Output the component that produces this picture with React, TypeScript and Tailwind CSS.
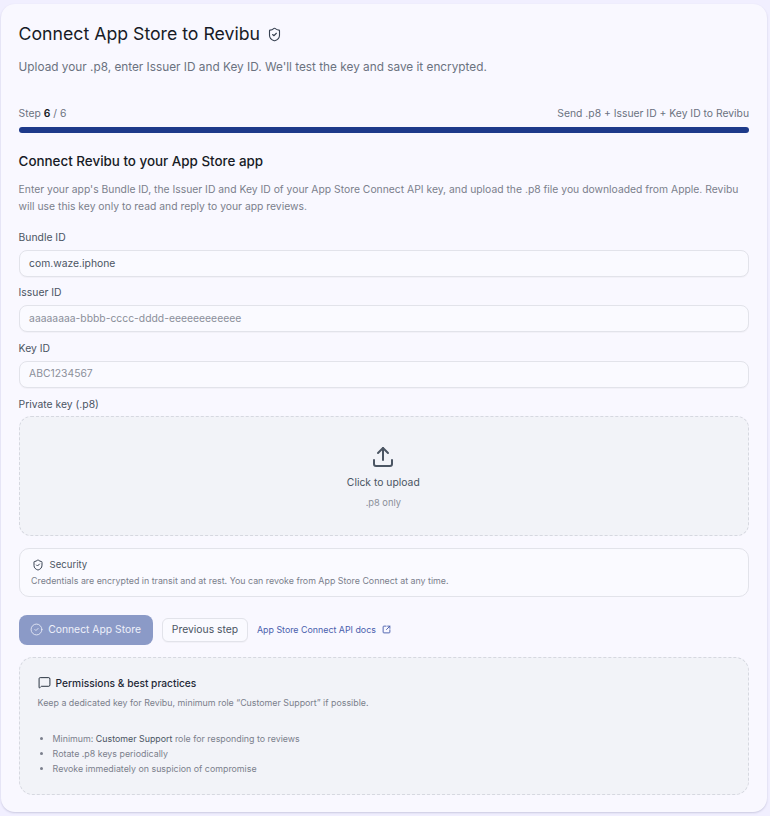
import { ShieldCheck, Upload, CircleCheck, SquareArrowOutUpRight, MessageSquare } from "lucide-react";

function Field({ label, value, placeholder }: { label: string; value?: string; placeholder?: boolean }) {
  return (
    <div className="flex flex-col">
      <label className="text-[10.35px] leading-[14px] text-[#4b5563] mb-[6px]">{label}</label>
      <div className={`h-[27px] rounded-[8px] border border-[#e2e3ea] bg-[#fafaff] shadow-[0_1px_1px_rgba(0,0,0,0.03)] flex items-center px-[9.5px] text-[10.35px] ${placeholder ? "text-[#8b8f9a]" : "text-[#4b5563]"}`}>
        {value}
      </div>
    </div>
  );
}

export default function App() {
  return (
    <div className="w-[770px] h-[816px] bg-[#f1efff] overflow-hidden font-['Inter',sans-serif] pt-[4px] pl-[1px]">
      <div className="w-[766px] h-[808px] bg-[#f9f8ff] rounded-[14px] shadow-[0_1px_2px_rgba(90,90,130,0.25)] pt-[19px] pl-[17.6px] pr-[18px]">
        <div className="flex items-center gap-[7px] h-[22px]">
          <h1 className="text-[17.7px] leading-[22px] font-normal text-[#171b26]">Connect App Store to Revibu</h1>
          <ShieldCheck size={15} strokeWidth={1.75} className="text-[#374151]" />
        </div>
        <p className="mt-[13px] text-[11.8px] leading-[18px] text-[#6b7280]">Upload your .p8, enter Issuer ID and Key ID. We'll test the key and save it encrypted.</p>
        <div className="mt-[30px] flex justify-between text-[10.35px] leading-[14px] text-[#6b7280]">
          <span>Step <b className="font-semibold text-[#171b26]">6</b> / 6</span>
          <span>Send .p8 + Issuer ID + Key ID to Revibu</span>
        </div>
        <div className="mt-[7px] h-[6px] rounded-full bg-[#1e3a8a]" />
        <h2 className="mt-[18px] text-[13.4px] leading-[20px] font-medium text-[#171b26]">Connect Revibu to your App Store app</h2>
        <p className="mt-[10px] text-[10.35px] leading-[17px] text-[#7b7f8c]">Enter your app's Bundle ID, the Issuer ID and Key ID of your App Store Connect API key, and upload the .p8 file you downloaded from Apple. Revibu will use this key only to read and reply to your app reviews.</p>
        <div className="mt-[15px] flex flex-col gap-[8.3px]">
          <Field label="Bundle ID" value="com.waze.iphone" />
          <Field label="Issuer ID" value="aaaaaaaa-bbbb-cccc-dddd-eeeeeeeeeeee" placeholder />
          <Field label="Key ID" value="ABC1234567" placeholder />
        </div>
        <label className="block mt-[9.4px] text-[10.35px] leading-[14px] text-[#4b5563]">Private key (.p8)</label>
        <div className="mt-[5px] h-[120px] rounded-[12px] border border-dashed border-[#d6d8e0] bg-[#f2f3f8] flex flex-col items-center justify-center pt-[2px] pr-[1px]">
          <Upload size={24} strokeWidth={2} className="text-[#4b5563]" />
          <div className="mt-[6px] text-[10.35px] leading-[14px] text-[#4b5563]">Click to upload</div>
          <div className="mt-[8px] text-[9.3px] leading-[12px] text-[#8b8f9a]">.p8 only</div>
        </div>
        <div className="mt-[12px] h-[49px] rounded-[10px] border border-[#e2e3ea] bg-[#fafaff] pl-[11.4px] pt-[8px]">
          <div className="flex items-center gap-[5px] pl-[1.5px] text-[9.6px] leading-[16px] text-[#4b5563]">
            <ShieldCheck size={12} strokeWidth={2} className="text-[#374151]" />
            Security
          </div>
          <div className="mt-[1px] text-[8.85px] leading-[14px] text-[#7b7f8c]">Credentials are encrypted in transit and at rest. You can revoke from App Store Connect at any time.</div>
        </div>
        <div className="mt-[18px] flex items-center">
          <button className="h-[30px] w-[134.4px] rounded-[8px] bg-[#8b9ac7] text-[#eef0fa] text-[10.35px] flex items-center justify-center gap-[5.5px] pr-[1px]">
            <CircleCheck size={13} strokeWidth={1.5} />
            Connect App Store
          </button>
          <button className="ml-[9px] h-[24px] w-[86px] rounded-[6px] border border-[#e2e3ea] bg-[#fafaff] shadow-[0_1px_1px_rgba(0,0,0,0.03)] text-[10.35px] text-[#4b5563]">Previous step</button>
          <a className="ml-[9px] flex items-center gap-[6px] text-[8.85px] text-[#4a60ad]">
            App Store Connect API docs
            <SquareArrowOutUpRight size={9} strokeWidth={2.5} />
          </a>
        </div>
        <div className="mt-[12px] h-[138px] rounded-[14px] border border-dashed border-[#d6d8e0] bg-[#f2f3f8] pl-[18px] pt-[17px]">
          <div className="flex items-center gap-[5px] text-[10.2px] leading-[16px] font-medium text-[#1f2937]">
            <MessageSquare size={13} strokeWidth={1.75} />
            Permissions &amp; best practices
          </div>
          <p className="mt-[5px] text-[8.85px] leading-[14px] text-[#7b7f8c]">Keep a dedicated key for Revibu, minimum role “Customer Support” if possible.</p>
          <ul className="mt-[21.5px] list-disc pl-[15px] text-[8.85px] leading-[15px] text-[#7b7f8c]">
            <li>Minimum: <span className="text-[#4b5563]">Customer Support</span> role for responding to reviews</li>
            <li>Rotate .p8 keys periodically</li>
            <li>Revoke immediately on suspicion of compromise</li>
          </ul>
        </div>
      </div>
    </div>
  );
}
